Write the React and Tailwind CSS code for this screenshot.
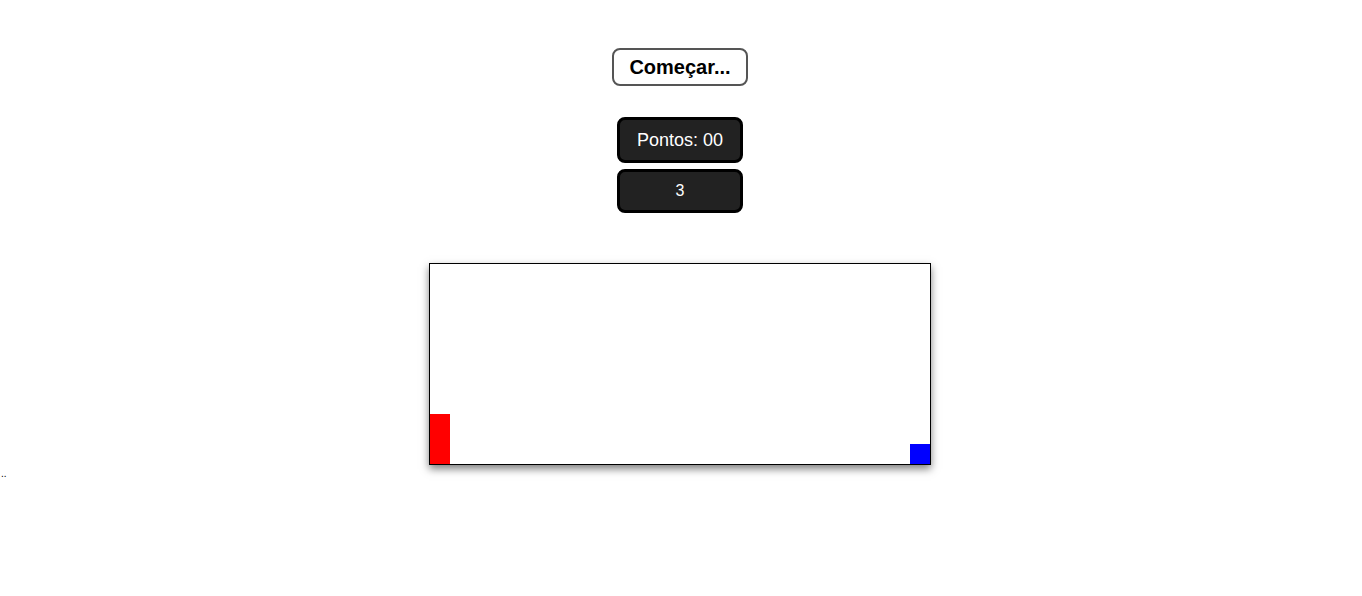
import React from "react";

export default function App() {
  return (
    <div className="w-full min-h-[596px] bg-white" style={{ fontFamily: '"Liberation Sans", Arial, sans-serif' }}>
      <div className="flex flex-col items-center pt-[48px] pr-[2px]">
        <button className="w-[136px] h-[38px] border-2 border-[#555] rounded-[8px] bg-white text-black text-[20px] font-bold leading-none">
          Começar...
        </button>
        <div className="mt-[31px] w-[126px] h-[46px] flex items-center justify-center bg-[#222] border-[3px] border-black rounded-[8px] text-white text-[18px]">
          Pontos: 00
        </div>
        <div className="mt-[6px] w-[126px] h-[44px] flex items-center justify-center bg-[#222] border-[3px] border-black rounded-[8px] text-white text-[16px]">
          3
        </div>
        <div className="mt-[50px] w-[502px] h-[202px] border border-black bg-white shadow-[0_4px_8px_rgba(0,0,0,0.5)] flex items-end justify-between">
          <div className="w-[20px] h-[50px] bg-[#ff0000]"></div>
          <div className="w-[20px] h-[20px] bg-[#0000ff]"></div>
        </div>
      </div>
      <div className="pl-[1px] mt-[4px] text-[10px] leading-none text-black">..</div>
    </div>
  );
}
